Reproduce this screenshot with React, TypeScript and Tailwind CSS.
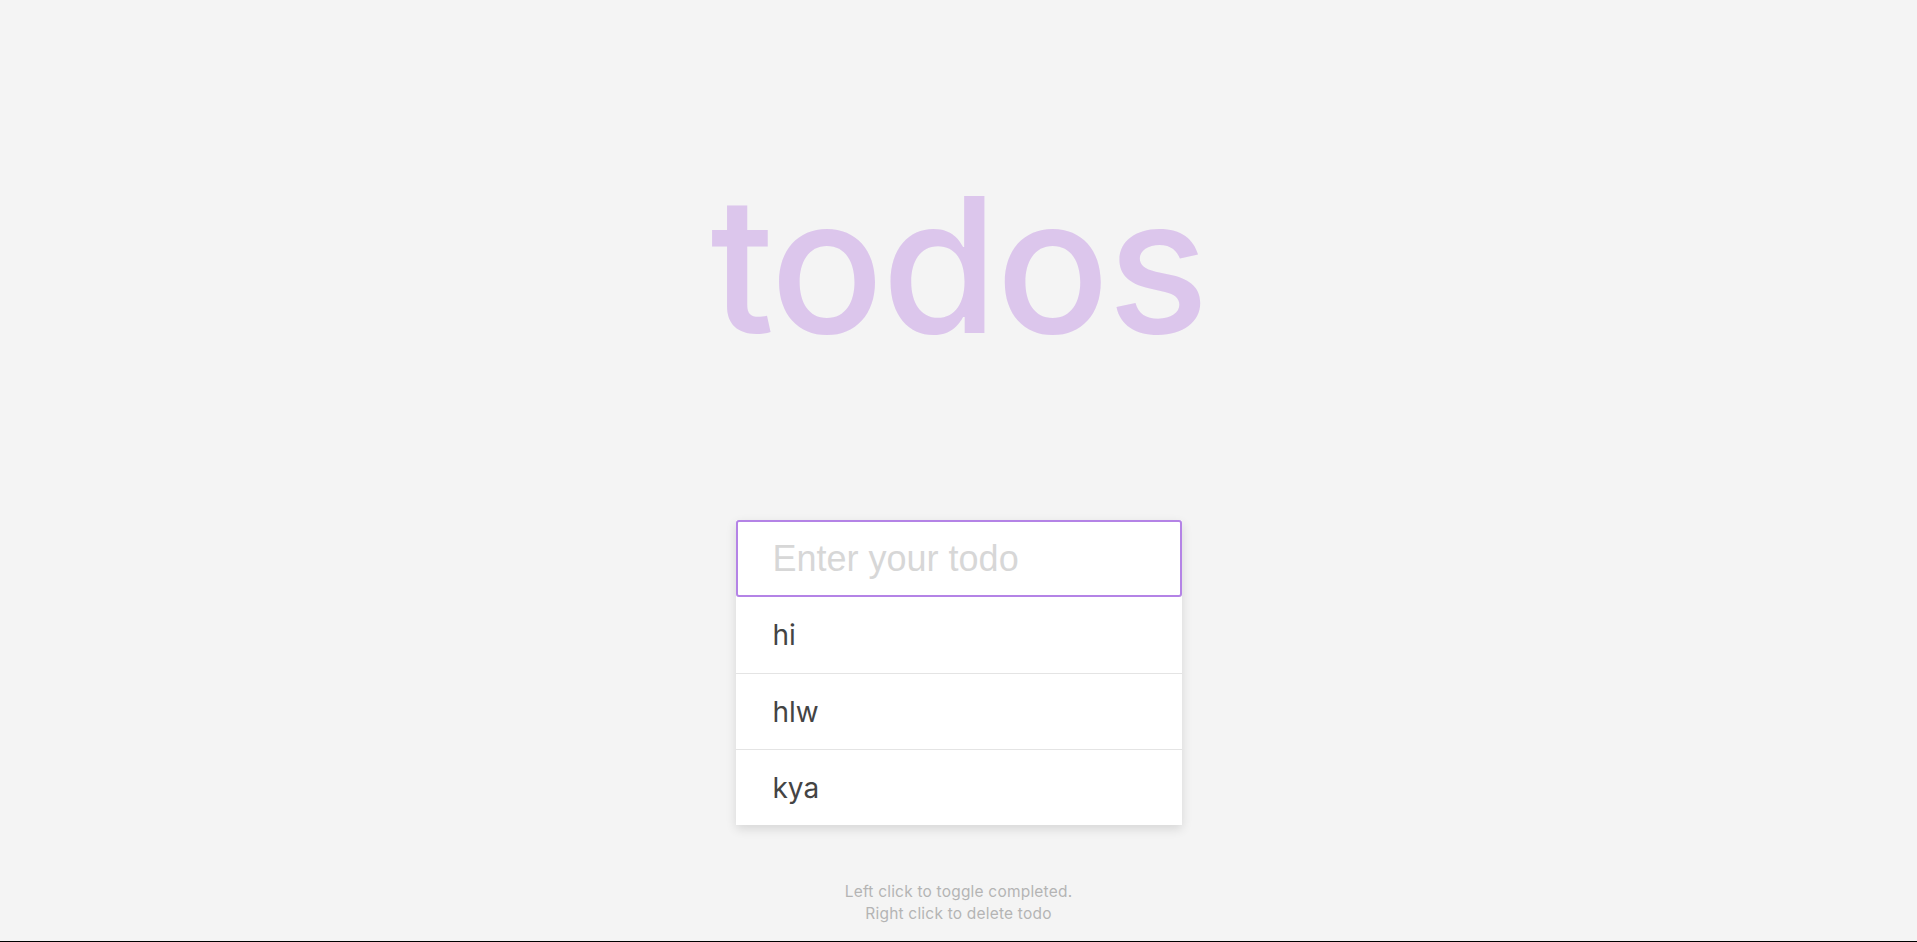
import { useState } from "react";

type Todo = {
  id: number;
  text: string;
  completed: boolean;
};

export default function App() {
  const [todos, setTodos] = useState<Todo[]>([
    { id: 1, text: "hi", completed: false },
    { id: 2, text: "hlw", completed: false },
    { id: 3, text: "kya", completed: false },
  ]);
  const [value, setValue] = useState("");

  const add = (e: React.FormEvent) => {
    e.preventDefault();
    if (!value.trim()) return;
    setTodos((t) => [...t, { id: Date.now(), text: value.trim(), completed: false }]);
    setValue("");
  };

  return (
    <div className="flex min-h-[942px] flex-col items-center border-b border-black bg-[#f4f4f4] font-['Inter',sans-serif]">
      <h1 className="mt-[171px] text-[188px] leading-none font-medium tracking-[-2px] text-[#dcc6ec] select-none">
        todos
      </h1>

      <div className="mt-[161px] w-[446px] bg-white shadow-[0_4px_10px_rgba(0,0,0,0.12)]">
        <form onSubmit={add}>
          <input
            value={value}
            onChange={(e) => setValue(e.target.value)}
            placeholder="Enter your todo"
            autoFocus
            className="block h-[77px] w-full rounded-[3px] border-2 border-[#b483e6] bg-white pl-[35px] font-['Liberation_Sans',Arial,sans-serif] text-[36px] text-[#444] outline-none placeholder:text-[#d7d7d7]"
          />
        </form>
        <ul>
          {todos.map((t, i) => (
            <li
              key={t.id}
              onClick={() =>
                setTodos((all) => all.map((x) => (x.id === t.id ? { ...x, completed: !x.completed } : x)))
              }
              onContextMenu={(e) => {
                e.preventDefault();
                setTodos((all) => all.filter((x) => x.id !== t.id));
              }}
              className={`flex h-[76px] cursor-pointer items-center pl-[37px] text-[28px] text-[#444] ${
                i > 0 ? "border-t border-[#e4e4e4]" : ""
              } ${t.completed ? "text-[#bbb] line-through" : ""}`}
            >
              {t.text}
            </li>
          ))}
        </ul>
      </div>

      <div className="mt-[56px] text-center text-[15.5px] leading-[22px] tracking-[0.2px] text-[#b4b4b4]">
        <p>Left click to toggle completed.</p>
        <p>Right click to delete todo</p>
      </div>
    </div>
  );
}
